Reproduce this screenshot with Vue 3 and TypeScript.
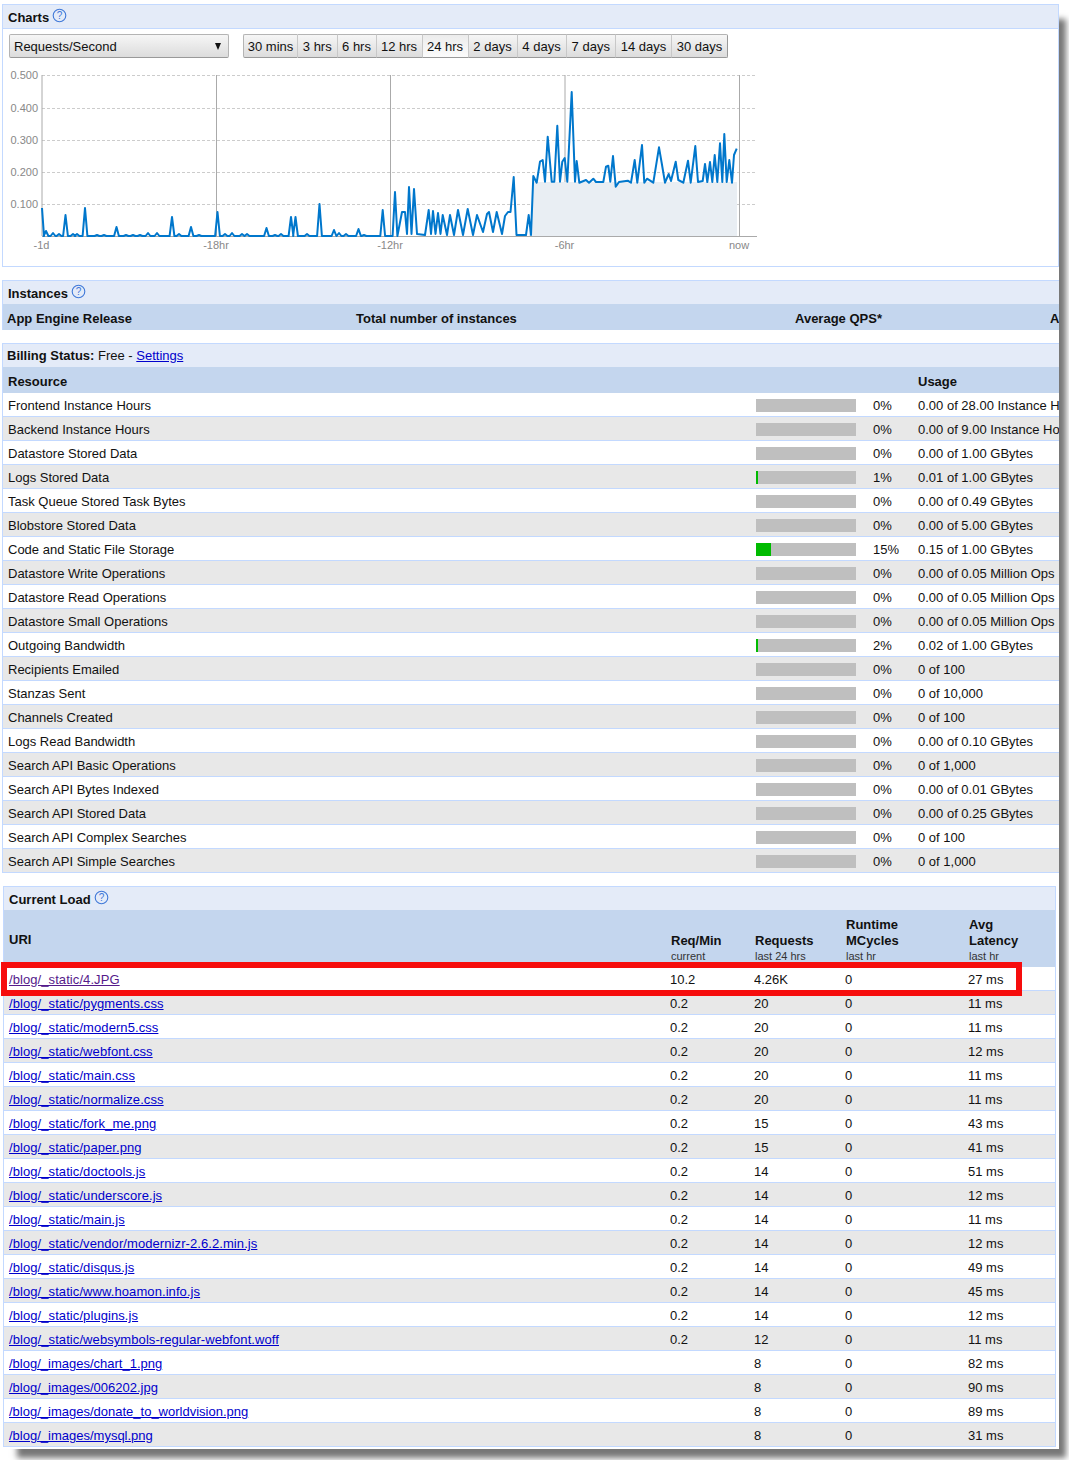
<script setup lang="ts">
  interface Usage {
    name: string;
    pct: number;
    usage: string;
  }

  interface Load {
    uri: string;
    rate: string;
    requests: string;
    latency: string;
  }

  const ranges = [
    { label: "30 mins", width: 55 },
    { label: "3 hrs", width: 39.5 },
    { label: "6 hrs", width: 39 },
    { label: "12 hrs", width: 46 },
    { label: "24 hrs", width: 46 },
    { label: "2 days", width: 49 },
    { label: "4 days", width: 49 },
    { label: "7 days", width: 49.5 },
    { label: "14 days", width: 56 },
    { label: "30 days", width: 56 },
  ];

  const yLabels = [
    { text: "0.500", y: 75 },
    { text: "0.400", y: 108 },
    { text: "0.300", y: 140 },
    { text: "0.200", y: 172 },
    { text: "0.100", y: 204 },
  ];

  const xLabels = [
    { text: "-1d", x: 42 },
    { text: "-18hr", x: 216.5 },
    { text: "-12hr", x: 390.5 },
    { text: "-6hr", x: 565 },
    { text: "now", x: 739.5 },
  ];

  // spikes on the quiet part of the graph: [x, y], each one drops back to the axis
  const spikes: number[][] = [
    [46, 231], [53, 233], [59, 234], [65.5, 215], [73, 234], [77, 234], [85, 208], [97, 235], [104, 235],
    [116.5, 227], [126, 235], [133, 235], [140, 235], [148, 233], [157, 233], [172, 217], [179, 234],
    [191, 227], [199, 235], [217.5, 212], [225, 234], [232, 233], [242, 234], [247, 234], [266.5, 228],
    [275, 235], [281, 234], [291, 217], [295.5, 217], [307, 234], [319.5, 204], [334, 230], [339, 233],
    [346, 234], [358.5, 229], [364, 235], [382.7, 210], [395, 192],
  ];

  const busy: number[][] = [
    [402, 212], [405, 212], [407, 234], [409, 187], [411.5, 234], [414, 189], [417, 234], [425, 235],
    [428.7, 210], [431, 234], [433, 211], [435.5, 234], [438, 213], [440.5, 234], [442.7, 215], [447, 235],
    [450, 215], [454, 235], [458, 210], [463, 235], [467.7, 209], [473, 235], [477, 215], [483, 232],
    [487, 214], [489, 212], [493, 232], [496.7, 212], [502, 234], [505, 216], [508, 212], [510.5, 212],
    [513.7, 177], [516.5, 235], [526, 235], [528.7, 215], [531, 235], [533.3, 176], [536.7, 182.7],
    [540, 161.7], [542.7, 160], [545, 181.7], [547.7, 136.7], [551.7, 181.7], [554.3, 181.7], [557.3, 125.7],
    [560, 181.7], [562.3, 161.7], [564.7, 158], [567.3, 181.7], [571.7, 92], [575, 181.7], [576.7, 161],
    [579.3, 182.7], [586, 180], [589, 182.7], [593.3, 178.7], [596, 182], [603.3, 182], [606, 166.7],
    [608.3, 165.7], [610.3, 181.7], [613, 156], [615.7, 186.7], [619, 182], [627.7, 180.7], [631, 182.7],
    [634.7, 160], [637.3, 182.7], [642, 145], [644.3, 182.7], [647, 178.7], [653.3, 182.7], [659, 147.3],
    [661.7, 163], [665, 182.7], [668.7, 174], [671, 181], [675.7, 161.7], [678.3, 180], [683.3, 182.7],
    [688, 160.7], [690.7, 182.7], [695.3, 146], [698, 182], [702.7, 181], [705, 164], [707.3, 182], [710, 162],
    [712.3, 182], [714.7, 155], [717.3, 182], [720, 143.3], [722.3, 182], [724.3, 134], [726.7, 182],
    [729.3, 160], [732, 182.7], [734, 155], [736.7, 148.7],
  ];

  const chartLine = (): string => {
    const pts: string[] = ["42,208", "44,236"];
    spikes.forEach(([x, y]) => {
      pts.push(`${x - 2.4},236`, `${x},${y}`, `${x + 2.4},236`);
    });
    busy.forEach(([x, y]) => pts.push(`${x},${y}`));
    return pts.join(" ");
  };

  const linePoints = chartLine();

  const usageRows: Usage[] = [
    { name: "Frontend Instance Hours", pct: 0, usage: "0.00 of 28.00 Instance Hours" },
    { name: "Backend Instance Hours", pct: 0, usage: "0.00 of 9.00 Instance Hours" },
    { name: "Datastore Stored Data", pct: 0, usage: "0.00 of 1.00 GBytes" },
    { name: "Logs Stored Data", pct: 1, usage: "0.01 of 1.00 GBytes" },
    { name: "Task Queue Stored Task Bytes", pct: 0, usage: "0.00 of 0.49 GBytes" },
    { name: "Blobstore Stored Data", pct: 0, usage: "0.00 of 5.00 GBytes" },
    { name: "Code and Static File Storage", pct: 15, usage: "0.15 of 1.00 GBytes" },
    { name: "Datastore Write Operations", pct: 0, usage: "0.00 of 0.05 Million Ops" },
    { name: "Datastore Read Operations", pct: 0, usage: "0.00 of 0.05 Million Ops" },
    { name: "Datastore Small Operations", pct: 0, usage: "0.00 of 0.05 Million Ops" },
    { name: "Outgoing Bandwidth", pct: 2, usage: "0.02 of 1.00 GBytes" },
    { name: "Recipients Emailed", pct: 0, usage: "0 of 100" },
    { name: "Stanzas Sent", pct: 0, usage: "0 of 10,000" },
    { name: "Channels Created", pct: 0, usage: "0 of 100" },
    { name: "Logs Read Bandwidth", pct: 0, usage: "0.00 of 0.10 GBytes" },
    { name: "Search API Basic Operations", pct: 0, usage: "0 of 1,000" },
    { name: "Search API Bytes Indexed", pct: 0, usage: "0.00 of 0.01 GBytes" },
    { name: "Search API Stored Data", pct: 0, usage: "0.00 of 0.25 GBytes" },
    { name: "Search API Complex Searches", pct: 0, usage: "0 of 100" },
    { name: "Search API Simple Searches", pct: 0, usage: "0 of 1,000" },
  ];

  const loadRows: Load[] = [
    { uri: "/blog/_static/4.JPG", rate: "10.2", requests: "4.26K", latency: "27 ms" },
    { uri: "/blog/_static/pygments.css", rate: "0.2", requests: "20", latency: "11 ms" },
    { uri: "/blog/_static/modern5.css", rate: "0.2", requests: "20", latency: "11 ms" },
    { uri: "/blog/_static/webfont.css", rate: "0.2", requests: "20", latency: "12 ms" },
    { uri: "/blog/_static/main.css", rate: "0.2", requests: "20", latency: "11 ms" },
    { uri: "/blog/_static/normalize.css", rate: "0.2", requests: "20", latency: "11 ms" },
    { uri: "/blog/_static/fork_me.png", rate: "0.2", requests: "15", latency: "43 ms" },
    { uri: "/blog/_static/paper.png", rate: "0.2", requests: "15", latency: "41 ms" },
    { uri: "/blog/_static/doctools.js", rate: "0.2", requests: "14", latency: "51 ms" },
    { uri: "/blog/_static/underscore.js", rate: "0.2", requests: "14", latency: "12 ms" },
    { uri: "/blog/_static/main.js", rate: "0.2", requests: "14", latency: "11 ms" },
    { uri: "/blog/_static/vendor/modernizr-2.6.2.min.js", rate: "0.2", requests: "14", latency: "12 ms" },
    { uri: "/blog/_static/disqus.js", rate: "0.2", requests: "14", latency: "49 ms" },
    { uri: "/blog/_static/www.hoamon.info.js", rate: "0.2", requests: "14", latency: "45 ms" },
    { uri: "/blog/_static/plugins.js", rate: "0.2", requests: "14", latency: "12 ms" },
    { uri: "/blog/_static/websymbols-regular-webfont.woff", rate: "0.2", requests: "12", latency: "11 ms" },
    { uri: "/blog/_images/chart_1.png", rate: "", requests: "8", latency: "82 ms" },
    { uri: "/blog/_images/006202.jpg", rate: "", requests: "8", latency: "90 ms" },
    { uri: "/blog/_images/donate_to_worldvision.png", rate: "", requests: "8", latency: "89 ms" },
    { uri: "/blog/_images/mysql.png", rate: "", requests: "8", latency: "31 ms" },
  ];

  const barWidth = (pct: number) => (pct > 0 ? Math.max(pct, 2) : 0) + "px";
</script>

<template>
  <div class="page">
    <section class="panel charts">
      <div class="panel-head">
        <b>Charts</b>
        <svg class="help" width="15" height="15" viewBox="0 0 15 15">
          <circle cx="7.5" cy="7.5" r="6.3" />
          <text x="7.5" y="11">?</text>
        </svg>
      </div>
      <div class="toolbar">
        <div class="select">
          <span>Requests/Second</span>
          <svg width="6" height="7" viewBox="0 0 6 7"><polygon points="0,0 6,0 3,7" fill="#111" /></svg>
        </div>
        <div class="ranges">
          <div
            v-for="r in ranges"
            :key="r.label"
            class="range"
            :class="{ 'range-on': r.label === '24 hrs' }"
            :style="{ width: r.width + 'px' }"
          >
            {{ r.label }}
          </div>
        </div>
      </div>
      <svg class="chart" width="770" height="190" viewBox="0 66 770 190">
        <line v-for="l in yLabels" :key="l.text" x1="42" x2="757" :y1="l.y + 0.5" :y2="l.y + 0.5" class="grid" />
        <line v-for="l in xLabels" :key="l.text" :x1="l.x" :x2="l.x" y1="75" y2="236" class="vert" />
        <line x1="42" x2="757" y1="236.5" y2="236.5" class="vert" />
        <polygon points="533,182 737,182 737,236 529,236" fill="#e9eef3" />
        <polyline :points="linePoints" class="series" />
        <text v-for="l in yLabels" :key="l.text" x="38" :y="l.y + 4" class="axis y-axis">{{ l.text }}</text>
        <text v-for="l in xLabels" :key="l.text" :x="l.x - 0.5" y="249" class="axis x-axis">{{ l.text }}</text>
      </svg>
    </section>

    <section class="panel instances">
      <div class="panel-head">
        <b>Instances</b>
        <svg class="help" width="15" height="15" viewBox="0 0 15 15">
          <circle cx="7.5" cy="7.5" r="6.3" />
          <text x="7.5" y="11">?</text>
        </svg>
      </div>
      <div class="instance-cols">
        <div class="inst-release">App Engine Release</div>
        <div class="inst-total">Total number of instances</div>
        <div class="inst-qps">Average QPS*</div>
        <div>Average Latency*</div>
      </div>
    </section>

    <section class="panel billing">
      <div class="panel-head billing-head">
        <b>Billing Status:</b> Free - <a href="#">Settings</a>
      </div>
      <table class="grid-table billing-table">
        <colgroup>
          <col style="width: 753px" />
          <col style="width: 117px" />
          <col style="width: 45px" />
          <col style="width: 300px" />
        </colgroup>
        <thead>
          <tr>
            <th>Resource</th>
            <th></th>
            <th></th>
            <th>Usage</th>
          </tr>
        </thead>
        <tbody>
          <tr v-for="row in usageRows" :key="row.name">
            <td>{{ row.name }}</td>
            <td class="bar-cell">
              <div class="bar"><div class="bar-fill" :style="{ width: barWidth(row.pct) }"></div></div>
            </td>
            <td class="plain">{{ row.pct }}%</td>
            <td>{{ row.usage }}</td>
          </tr>
        </tbody>
      </table>
    </section>

    <section class="panel load">
      <div class="panel-head load-head">
        <b>Current Load</b>
        <svg class="help" width="15" height="15" viewBox="0 0 15 15">
          <circle cx="7.5" cy="7.5" r="6.3" />
          <text x="7.5" y="11">?</text>
        </svg>
      </div>
      <table class="grid-table load-table">
        <colgroup>
          <col style="width: 666px" />
          <col style="width: 84px" />
          <col style="width: 91px" />
          <col style="width: 123px" />
          <col style="width: 87px" />
        </colgroup>
        <thead>
          <tr>
            <th class="uri-head">URI</th>
            <th>Req/Min<small>current</small></th>
            <th>Requests<small>last 24 hrs</small></th>
            <th>Runtime<br />MCycles<small>last hr</small></th>
            <th>Avg<br />Latency<small>last hr</small></th>
          </tr>
        </thead>
        <tbody>
          <tr v-for="(row, i) in loadRows" :key="row.uri">
            <td>
              <a href="#" :class="{ visited: i === 0, wide: row.uri.includes('_static') }">{{ row.uri }}</a>
            </td>
            <td>{{ row.rate }}</td>
            <td>{{ row.requests }}</td>
            <td>0</td>
            <td>{{ row.latency }}</td>
          </tr>
        </tbody>
      </table>
      <div class="highlight"></div>
    </section>
  </div>
</template>

<style>
  html,
  body {
    margin: 0;
    background: #fff;
  }

  #app {
    width: 1069px;
    height: 1460px;
  }
</style>

<style scoped>
  .page {
    position: relative;
    box-sizing: border-box;
    width: 1059px;
    height: 1449px;
    padding-top: 4px;
    background: #fff;
    box-shadow: 12px 14px 6px -5px #777;
    overflow: hidden;
    font-family: "Liberation Sans", Arial, sans-serif;
    font-size: 13px;
    color: #111;
  }

  .panel {
    position: relative;
    box-sizing: border-box;
    border: 1px solid #c3d9ff;
    border-width: 1px 0 0 1px;
    margin-left: 2px;
  }

  .panel-head {
    display: flex;
    align-items: center;
    box-sizing: border-box;
    height: 23px;
    padding: 1px 0 0 5px;
    background: #e4ebf8;
    white-space: pre;
  }

  .help {
    margin: -4px 0 0 3px;
  }

  .help circle {
    fill: none;
    stroke: #3f78d8;
    stroke-width: 1.1;
  }

  .help text {
    fill: #3f78d8;
    font-size: 10px;
    text-anchor: middle;
  }

  .charts {
    height: 263px;
    border-right: 1px solid #c3d9ff;
    border-bottom: 1px solid #c3d9ff;
    width: 1057px;
  }

  .charts .panel-head {
    border-bottom: 1px solid #c3d9ff;
    height: 24px;
  }

  .toolbar {
    display: flex;
    gap: 14px;
    padding: 5px 0 0 6px;
  }

  .select,
  .range {
    box-sizing: border-box;
    height: 24px;
    line-height: 24px;
    background: linear-gradient(#f6f6f6, #dcdcdc);
    border: 1px solid #b4b4b4;
    border-bottom-color: #999;
  }

  .select {
    display: flex;
    justify-content: space-between;
    align-items: center;
    width: 220px;
    padding: 1px 7px 0 4px;
    border-radius: 2px;
  }

  .ranges {
    display: flex;
  }

  .range {
    flex: none;
    text-align: center;
    border-left-width: 0;
    border-right-color: #c8c8c8;
  }

  .range:first-child {
    border-left-width: 1px;
    border-radius: 2px 0 0 2px;
  }

  .range:last-child {
    border-right-color: #999;
    border-radius: 0 2px 2px 0;
  }

  .range-on {
    background: linear-gradient(#ececec, #fbfbfb);
  }

  .chart {
    display: block;
    margin: 8px 0 0 -3px;
  }

  .grid {
    stroke: #ccc;
    stroke-dasharray: 3 2;
  }

  .vert {
    stroke: #aaa;
  }

  .series {
    fill: none;
    stroke: #0077cc;
    stroke-width: 2;
    stroke-linejoin: round;
  }

  .axis {
    fill: #888;
    font-size: 11px;
  }

  .y-axis {
    text-anchor: end;
  }

  .x-axis {
    text-anchor: middle;
  }

  .instances {
    margin-top: 13px;
    height: 50px;
  }

  .instance-cols {
    display: flex;
    align-items: center;
    height: 26px;
    padding: 3px 0 0 4px;
    box-sizing: border-box;
    background: #c4d6ee;
    font-weight: bold;
    white-space: nowrap;
  }

  .instance-cols div {
    flex: none;
  }

  .instance-cols .inst-release {
    width: 349px;
  }

  .instance-cols .inst-total {
    width: 439px;
  }

  .instance-cols .inst-qps {
    width: 255px;
  }

  .billing {
    margin-top: 13px;
  }

  .billing-head {
    padding: 0 0 0 4px;
  }

  a {
    color: #0000cc;
    text-decoration: underline;
  }

  a.visited {
    color: #551a8b;
  }

  a.wide {
    letter-spacing: 0.08px;
  }

  .grid-table {
    border-collapse: separate;
    border-spacing: 0;
    table-layout: fixed;
  }

  .grid-table th {
    box-sizing: border-box;
    padding: 0 0 0 5px;
    background: #c4d6ee;
    text-align: left;
    white-space: nowrap;
  }

  .grid-table td {
    box-sizing: border-box;
    height: 24px;
    padding: 2px 0 0 5px;
    border-bottom: 1px solid #c3d9ff;
    white-space: nowrap;
    overflow: hidden;
  }

  .grid-table tbody tr:nth-child(even) td {
    background: #e8e8e8;
  }

  .billing-table {
    width: 1215px;
  }

  .billing-table th {
    height: 26px;
    padding-top: 2px;
  }

  .billing-table td.bar-cell {
    padding-left: 0;
  }

  .billing-table td.plain {
    padding-left: 0;
  }

  .billing-table th:nth-child(4),
  .billing-table td:nth-child(4) {
    padding-left: 0;
  }

  .bar {
    width: 100px;
    height: 13px;
    background: #bfbfbf;
  }

  .bar-fill {
    height: 100%;
    background: #00bb00;
  }

  .load {
    margin: 13px 0 0 3px;
    width: 1053px;
    border-right: 1px solid #c3d9ff;
  }

  .load-table {
    width: 1051px;
  }

  .load-table th {
    height: 57px;
    padding: 0 0 5px 1px;
    vertical-align: bottom;
    line-height: 16px;
  }

  .load-table th small {
    display: block;
    height: 12px;
    margin-top: 1px;
    line-height: 12px;
    font-size: 11px;
    font-weight: normal;
    color: #333;
  }

  .load-table th.uri-head {
    padding: 3px 0 0 5px;
    vertical-align: middle;
  }

  .load-table td {
    padding-left: 0;
  }

  .load-table td:first-child {
    padding-left: 5px;
  }

  .highlight {
    position: absolute;
    top: 75px;
    left: -3px;
    box-sizing: border-box;
    width: 1021px;
    height: 34px;
    border: 6px solid #f60d0d;
  }
</style>
